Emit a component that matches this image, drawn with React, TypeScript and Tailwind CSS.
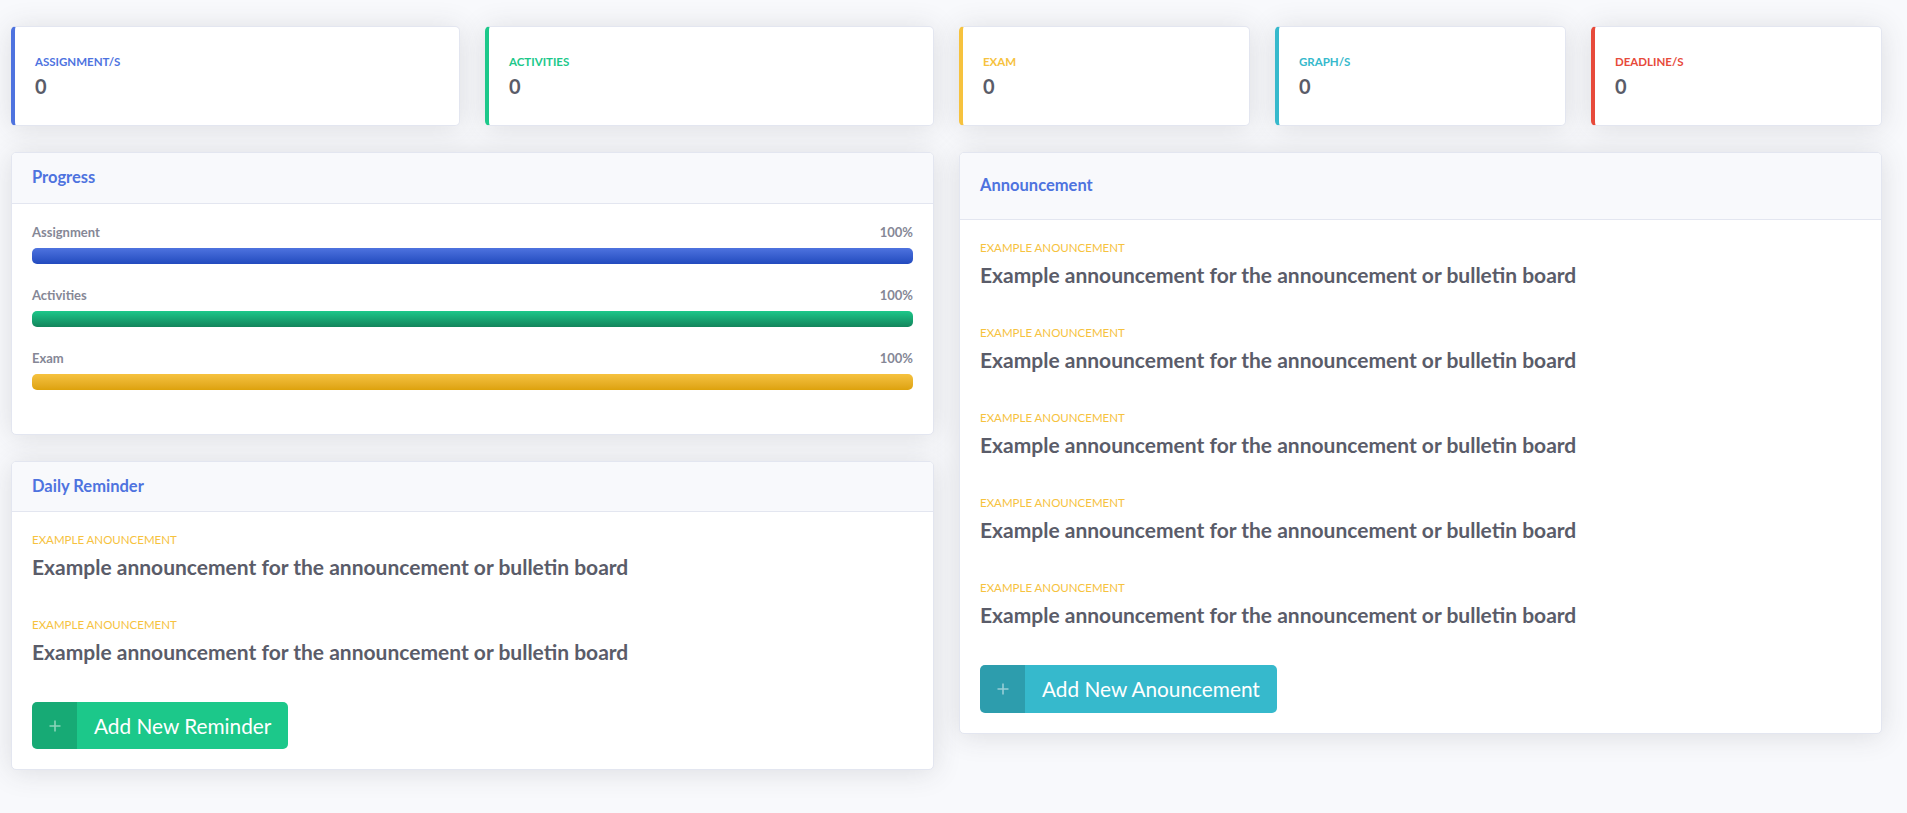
import React from "react";

const FONT = "font-['Lato','Noto_Sans',sans-serif]";

type Stat = { label: string; border: string; text: string };

const leftStats: Stat[] = [
  { label: "Assignment/s", border: "border-l-[#4e73df]", text: "text-[#4e73df]" },
  { label: "Activities", border: "border-l-[#1cc88a]", text: "text-[#1cc88a]" },
];

const rightStats: Stat[] = [
  { label: "Exam", border: "border-l-[#f6c23e]", text: "text-[#f6c23e]" },
  { label: "Graph/s", border: "border-l-[#36b9cc]", text: "text-[#36b9cc]" },
  { label: "Deadline/s", border: "border-l-[#e74a3b]", text: "text-[#e74a3b]" },
];

const bars = [
  { label: "Assignment", bar: "bg-gradient-to-b from-[#4e73df] to-[#224abe]" },
  { label: "Activities", bar: "bg-gradient-to-b from-[#1cc88a] to-[#13855c]" },
  { label: "Exam", bar: "bg-gradient-to-b from-[#f6c23e] to-[#dda20a]" },
];

const SHADOW = "shadow-[0_2px_28px_0_rgba(58,59,69,0.15)]";

function StatCard({ s }: { s: Stat }) {
  return (
    <div
      className={`flex-1 h-[100px] bg-white rounded-[5px] border border-[#e3e6f0] border-l-4 ${s.border} ${SHADOW} pl-[20px] pt-[26px]`}
    >
      <div className={`text-[11.5px] font-bold uppercase leading-[17px] mb-1 ${s.text}`}>
        {s.label}
      </div>
      <div className="text-[20px] font-bold leading-[24px] text-[#5a5c69]">0</div>
    </div>
  );
}

function Card({
  title,
  headerH,
  children,
}: {
  title: string;
  headerH: string;
  children: React.ReactNode;
}) {
  return (
    <div className={`bg-white rounded-[5px] border border-[#e3e6f0] ${SHADOW} overflow-hidden`}>
      <div
        className={`${headerH} flex items-center px-[20px] pb-[1px] bg-[#f8f9fc] border-b border-[#e3e6f0]`}
      >
        <h6 className="text-[16.5px] font-bold leading-[19px] text-[#4e73df]">{title}</h6>
      </div>
      <div className="p-[20px]">{children}</div>
    </div>
  );
}

function Notice() {
  return (
    <div className="mb-[38px]">
      <div className="text-[11.5px] uppercase leading-[16px] text-[#f6c23e] mb-[6px]">
        Example anouncement
      </div>
      <div className="text-[21px] font-bold leading-[25px] text-[#5a5c69]">
        Example announcement for the announcement or bulletin board
      </div>
    </div>
  );
}

function AddButton({ label, color, h }: { label: string; color: string; h: string }) {
  return (
    <button className={`flex items-stretch ${h} rounded-[5px] overflow-hidden text-white ${color}`}>
      <span className="w-[45px] flex items-center justify-center bg-black/15">
        <svg width="12" height="12" viewBox="0 0 12 12" className="text-white/50">
          <path d="M6 0.5v11M0.5 6h11" stroke="currentColor" strokeWidth="1.6" fill="none" />
        </svg>
      </span>
      <span className="flex items-center px-[17px] text-[20.8px]">{label}</span>
    </button>
  );
}

export default function App() {
  return (
    <div className={`min-h-screen bg-[#f8f9fc] ${FONT} pt-[26px] pl-[11px] pr-[25px]`}>
      <div className="grid grid-cols-2 gap-[25px]">
        <div className="flex flex-col">
          <div className="flex gap-[25px] mb-[26px]">
            {leftStats.map((s) => (
              <StatCard key={s.label} s={s} />
            ))}
          </div>

          <div className="mb-[26px]">
            <Card title="Progress" headerH="h-[51px]">
              <div className="pt-[1px]">
                {bars.map((b) => (
                  <div key={b.label}>
                    <div className="flex justify-between text-[13px] font-bold leading-[15px] text-[#858796] mb-[8px]">
                      <span>{b.label}</span>
                      <span>100%</span>
                    </div>
                    <div className={`h-[16px] rounded-[5px] mb-[24px] ${b.bar}`} />
                  </div>
                ))}
              </div>
            </Card>
          </div>

          <Card title="Daily Reminder" headerH="h-[50px]">
            <Notice />
            <Notice />
            <AddButton label="Add New Reminder" color="bg-[#1cc88a]" h="h-[47px]" />
          </Card>
        </div>

        <div className="flex flex-col gap-[26px] items-stretch">
          <div className="flex gap-[25px]">
            {rightStats.map((s) => (
              <StatCard key={s.label} s={s} />
            ))}
          </div>

          <div>
            <Card title="Announcement" headerH="h-[67px]">
              <Notice />
              <Notice />
              <Notice />
              <Notice />
              <Notice />
              <AddButton label="Add New Anouncement" color="bg-[#36b9cc]" h="h-[48px]" />
            </Card>
          </div>
        </div>
      </div>
    </div>
  );
}
